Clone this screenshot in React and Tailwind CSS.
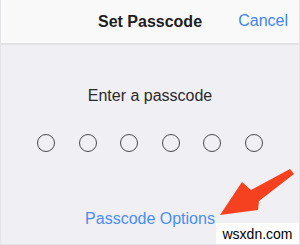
import React from "react";

export default function App() {
  const font = { fontFamily: '"Liberation Sans", Arial, sans-serif' };
  return (
    <div
      className="relative w-[300px] h-[245px] overflow-hidden bg-[#f0eff4] border-x border-b border-[#e4e4e8]"
      style={font}
    >
      <div className="relative h-[43px] bg-[#f9f9f9] flex items-center justify-center">
        <span className="text-[16px] font-bold text-[#1e1e1e] leading-[18px]">Set Passcode</span>
        <span className="absolute right-[11px] top-[12px] text-[16px] text-[#3f86ee] leading-[18px]">
          Cancel
        </span>
      </div>
      <div className="h-[2px] bg-[#e2e2e4]" />
      <div className="flex flex-col items-center">
        <div className="mt-[42px] text-[16px] leading-[18px] text-[#2a2a2a]">Enter a passcode</div>
        <div className="mt-[29px] flex gap-[23.5px]">
          {[0, 1, 2, 3, 4, 5].map((i) => (
            <div key={i} className="w-[18px] h-[18px] rounded-full border-[1.5px] border-[#4a4a4a]" />
          ))}
        </div>
        <div className="mt-[58px] text-[16px] leading-[18px] text-[#4a8ef0]">Passcode Options</div>
      </div>
      <svg className="absolute left-0 top-0" width="300" height="245" viewBox="0 0 300 245">
        <polygon
          points="219,215 241,182 250,190 289,169 293,174 258,201 257,210"
          fill="#f5411f"
        />
      </svg>
      <div className="absolute right-0 bottom-0 w-[83px] h-[21px] bg-white flex items-center justify-center">
        <span className="text-[14px] leading-[16px] text-black">wsxdn.com</span>
      </div>
    </div>
  );
}
